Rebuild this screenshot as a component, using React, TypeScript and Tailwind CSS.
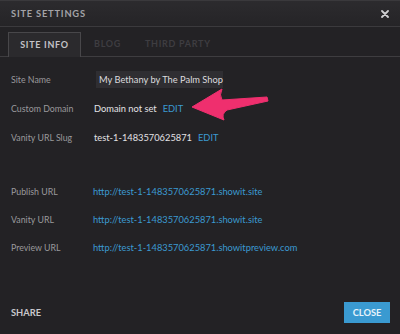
import React from "react";

const Row = ({ label, children, h }: { label: string; children: React.ReactNode; h: string }) => (
  <div className={`flex items-center ${h}`}>
    <div className="w-[94px] shrink-0 pl-[11px] text-[8.8px] text-[#9a999c]">{label}</div>
    <div className="flex items-center whitespace-nowrap text-[9.3px]">{children}</div>
  </div>
);

export default function App() {
  return (
    <div
      className="relative flex h-[334px] w-[400px] flex-col overflow-hidden bg-[#232225]"
      style={{ fontFamily: "Lato, 'Noto Sans', sans-serif" }}
    >
      {/* Header */}
      <div className="flex h-[27px] shrink-0 items-center justify-between border-t border-b border-t-[#3a393c] border-b-[#3b3a3d] bg-gradient-to-b from-[#2c2b2e] to-[#252427] pl-[11px] pr-[11px]">
        <span className="text-[9.3px] font-bold tracking-[0.8px] text-[#a4a3a7]">SITE SETTINGS</span>
        <svg width="8" height="8" viewBox="0 0 8 8">
          <path d="M1 1 L7 7 M7 1 L1 7" stroke="#cfcfd2" strokeWidth="1.8" strokeLinecap="round" />
        </svg>
      </div>

      {/* Tabs */}
      <div className="flex h-[30px] shrink-0 items-end border-b border-[#3e3d40] pl-[8px]">
        <div className="-mb-px flex h-[25px] w-[73px] items-center justify-center border border-b-0 border-[#48474a] bg-[#2b2a2d] text-[9px] font-bold tracking-[0.7px] text-[#c4c3c7]">
          SITE INFO
        </div>
        <div className="flex h-[24px] items-center pl-[13px] text-[9px] font-bold tracking-[0.7px] text-[#3e3d41]">
          BLOG
        </div>
        <div className="flex h-[24px] items-center pl-[24px] text-[9px] font-bold tracking-[0.7px] text-[#3e3d41]">
          THIRD PARTY
        </div>
      </div>

      {/* Content */}
      <div className="flex flex-col pt-[8px]">
        <Row label="Site Name" h="h-[29px]">
          <div className="ml-[2px] flex h-[17px] w-[127px] items-center bg-[#2f2e32] pl-[3px] text-[#dcdbdf]">
            My Bethany by The Palm Shop
          </div>
        </Row>
        <Row label="Custom Domain" h="h-[29px]">
          <span className="text-[#e4e3e6]">Domain not set</span>
          <span className="ml-[6px] text-[#3b9ad2]">EDIT</span>
        </Row>
        <Row label="Vanity URL Slug" h="h-[29px]">
          <span className="text-[#e4e3e6]">test-1-1483570625871</span>
          <span className="ml-[6px] text-[#3b9ad2]">EDIT</span>
        </Row>
        <div className="h-[26px]" />
        <Row label="Publish URL" h="h-[28px]">
          <span className="-ml-px text-[#3b9ad2]">http://test-1-1483570625871.showit.site</span>
        </Row>
        <Row label="Vanity URL" h="h-[28px]">
          <span className="-ml-px text-[#3b9ad2]">http://test-1-1483570625871.showit.site</span>
        </Row>
        <Row label="Preview URL" h="h-[28px]">
          <span className="-ml-px text-[#3b9ad2]">http://test-1-1483570625871.showitpreview.com</span>
        </Row>
      </div>

      {/* Footer */}
      <div className="mt-auto flex items-center justify-between pb-[11px] pl-[11px] pr-[10px]">
        <span className="text-[9.3px] font-bold text-[#c9c8cc]">SHARE</span>
        <div className="flex h-[21px] w-[46px] items-center justify-center bg-[#3a9ad1] text-[9.3px] font-bold text-[#e6f3fb]">
          CLOSE
        </div>
      </div>

      {/* Arrow annotation */}
      <svg className="pointer-events-none absolute left-0 top-0" width="400" height="334" viewBox="0 0 400 334">
        <path
          d="M192 107 L222 89 Q219 95 222 100 L267 97 L268 101 L227 110 Q221 114 224 120 Z"
          fill="#ef2f6e"
          stroke="#ef2f6e"
          strokeWidth="1"
          strokeLinejoin="round"
        />
      </svg>
    </div>
  );
}
